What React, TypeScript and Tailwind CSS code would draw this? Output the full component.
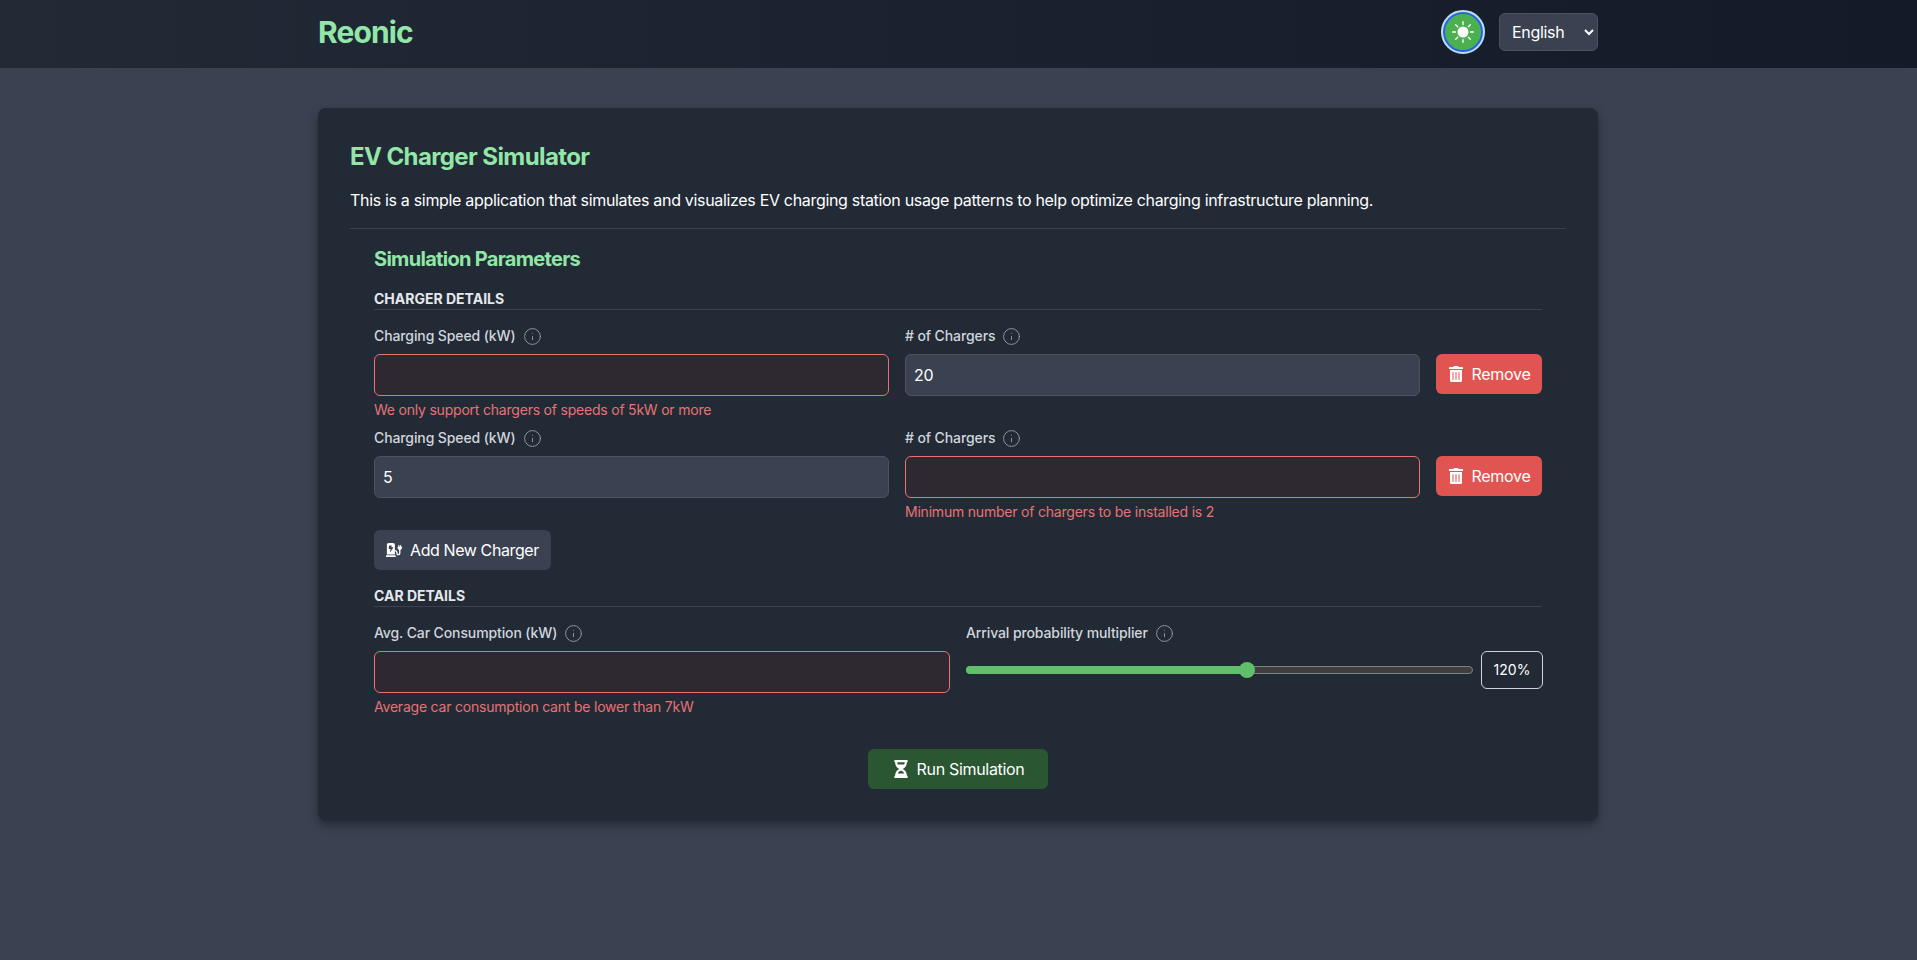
import { Info } from "lucide-react";
import { BsSunFill } from "react-icons/bs";
import { FaChargingStation, FaHourglassHalf, FaTrashAlt } from "react-icons/fa";

const inputBase = "h-[42px] w-full rounded-md border px-2 text-[16px] text-white outline-none";
const inputOk = "border-[#4b5260] bg-[#3a4150]";
const inputBad = "border-[#e57373] bg-[#2e2831]";

function FieldLabel({ text }: { text: string }) {
  return (
    <div className="mb-2 flex h-5 items-center gap-[7px] text-sm font-medium tracking-[-0.008em] text-[#d1d5db]">
      <span>{text}</span>
      <Info className="text-[#9ca3af]" size={19} strokeWidth={1.1} />
    </div>
  );
}

function Field({
  label,
  value,
  error,
  className = "",
}: {
  label: string;
  value?: string;
  error?: string;
  className?: string;
}) {
  return (
    <div className={`min-w-0 flex-1 ${className}`}>
      <FieldLabel text={label} />
      <input className={`${inputBase} ${error ? inputBad : inputOk}`} defaultValue={value} type="text" />
      {error ? <p className="mt-1 h-5 text-sm leading-5 tracking-[-0.015em] text-[#e57373]">{error}</p> : null}
    </div>
  );
}

function RemoveButton() {
  return (
    <button
      className="mt-7 flex h-10 w-[106px] shrink-0 items-center justify-center gap-2 rounded-md bg-[#e05551] text-[16px] text-white"
      type="button"
    >
      <FaTrashAlt size={16} />
      Remove
    </button>
  );
}

function SectionTitle({ text }: { text: string }) {
  return <h3 className="border-b border-[#3a4150] text-sm leading-5 font-bold tracking-normal text-[#e5e7eb] uppercase">{text}</h3>;
}

export default function App() {
  return (
    <div className="min-h-[960px] bg-[#3a4150] font-['Inter',sans-serif] tracking-[-0.02em] text-white">
      <header className="h-[68px] bg-gradient-to-r from-[#222a36] to-[#141a28] pb-1">
        <div className="ml-[318px] flex h-full w-[1280px] items-center justify-between">
          <span className="text-[30px] font-bold tracking-[-0.03em] text-[#92e6a7]">Reonic</span>
          <div className="flex items-center gap-[14px]">
            <button
              className="flex h-[44px] w-[44px] items-center justify-center rounded-full border-2 border-[#bfdbfe] bg-[#4caf50] shadow-[inset_0_0_0_2px_#2563eb]"
              type="button"
            >
              <BsSunFill size={22} />
            </button>
            <select className="h-[38px] w-[99px] rounded-md border border-[#4b5260] bg-[#3a4150] pl-2 text-[16px] text-white">
              <option>English</option>
            </select>
          </div>
        </div>
      </header>

      <main className="mt-10 ml-[318px] w-[1280px] rounded-lg bg-[#222a36] px-8 pt-[31px] pb-8 shadow-[0_4px_10px_rgba(0,0,0,0.35)]">
        <h1 className="text-2xl leading-9 font-bold tracking-[-0.025em] text-[#92e6a7]">EV Charger Simulator</h1>
        <p className="mt-[13px] text-[16px] leading-6 text-white">
          This is a simple application that simulates and visualizes EV charging station usage patterns to help optimize
          charging infrastructure planning.
        </p>
        <hr className="mt-4 border-[#3a4150]" />

        <section className="px-6">
          <h2 className="mt-4 text-xl leading-7 font-bold tracking-[-0.035em] text-[#92e6a7]">Simulation Parameters</h2>

          <div className="mt-4">
            <SectionTitle text="Charger Details" />
          </div>
          <div className="mt-4 flex items-start gap-4">
            <Field error="We only support chargers of speeds of 5kW or more" label="Charging Speed (kW)" />
            <Field label="# of Chargers" value="20" />
            <RemoveButton />
          </div>
          <div className="mt-2 flex items-start gap-4">
            <Field label="Charging Speed (kW)" value="5" />
            <Field error="Minimum number of chargers to be installed is 2" label="# of Chargers" />
            <RemoveButton />
          </div>
          <button
            className="mt-2 flex h-10 items-center gap-2 rounded-md bg-[#3a4150] px-3 text-[16px] tracking-[-0.025em] text-white"
            type="button"
          >
            <FaChargingStation size={16} />
            Add New Charger
          </button>

          <div className="mt-4">
            <SectionTitle text="Car Details" />
          </div>
          <div className="mt-4 flex items-start gap-4">
            <Field
              className="max-w-[576px]"
              error="Average car consumption cant be lower than 7kW"
              label="Avg. Car Consumption (kW)"
            />
            <div className="flex-1">
              <FieldLabel text="Arrival probability multiplier" />
              <div className="-mr-px flex items-center gap-2">
                <div className="relative h-2 flex-1 rounded-full border border-[#7b7f87] bg-[#3f3f3f]">
                  <div className="absolute inset-y-[-1px] left-[-1px] w-[55.5%] rounded-full bg-[#5fbf6b]" />
                  <div className="absolute top-1/2 left-[55.5%] h-4 w-4 -translate-x-1/2 -translate-y-1/2 rounded-full bg-[#5fbf6b]" />
                </div>
                <div className="flex h-[38px] w-[62px] items-center justify-center rounded-md border border-[#d1d5db] text-sm tracking-normal">
                  120%
                </div>
              </div>
            </div>
          </div>

          <div className="mt-8 flex justify-center">
            <button
              className="flex h-10 w-[180px] items-center justify-center gap-[7px] rounded-md bg-[#2a5632] text-[16px] text-white"
              type="button"
            >
              <FaHourglassHalf size={18} />
              Run Simulation
            </button>
          </div>
        </section>
      </main>
    </div>
  );
}
